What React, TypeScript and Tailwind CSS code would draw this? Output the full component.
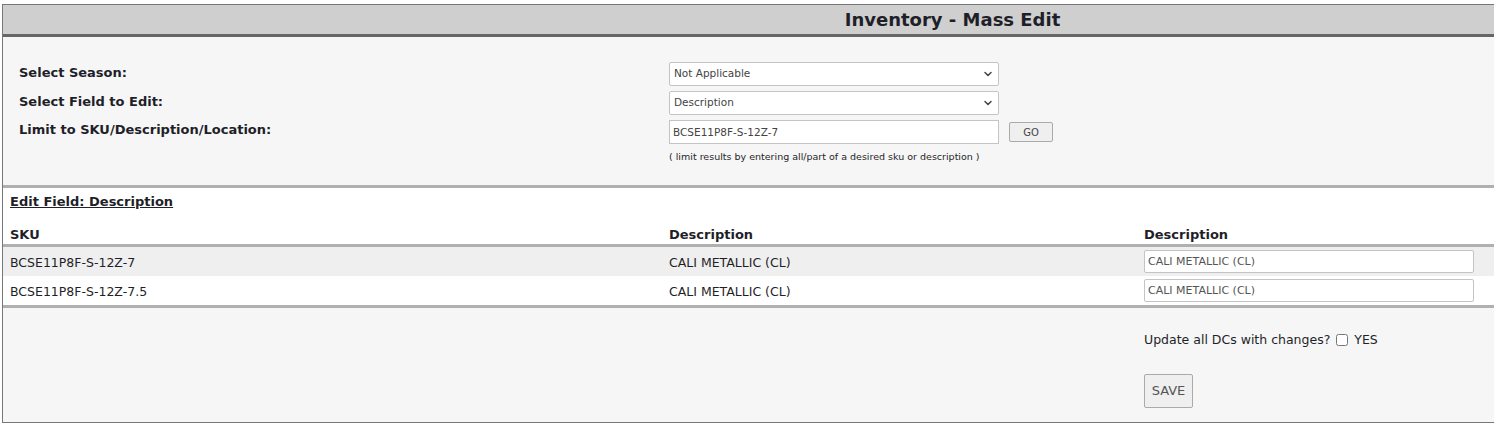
import { ChevronDown } from "lucide-react";

const rows = [
  { sku: "BCSE11P8F-S-12Z-7", desc: "CALI METALLIC (CL)" },
  { sku: "BCSE11P8F-S-12Z-7.5", desc: "CALI METALLIC (CL)" },
];

function Select({ value }: { value: string }) {
  return (
    <div className="relative w-[330px] h-[24px] bg-white border border-[#c4c4c4] rounded-[2px] flex items-center px-[4px] text-[10.5px] text-[#444]">
      <span>{value}</span>
      <ChevronDown className="absolute right-[4px] top-[5px] w-[12px] h-[12px] text-[#444]" strokeWidth={3} />
    </div>
  );
}

export default function App() {
  return (
    <div className="w-full pt-[4px] pl-[2px] pr-[1px] text-[#1f1f29] text-[12.5px]" style={{ fontFamily: '"DejaVu Sans", sans-serif' }}>
      <div className="border border-[#777] border-r-0 flex flex-col h-[419px]">
        {/* Header */}
        <div className="h-[32px] bg-[#cfcfcf] border-b-[3px] border-[#666] flex items-center justify-center pl-[408px]">
          <h1 className="text-[18px] font-bold">Inventory - Mass Edit</h1>
        </div>

        {/* Filters */}
        <div className="bg-[#f6f6f6] h-[151px] border-b-[3px] border-[#b0b0b0] flex pt-[25px]">
          <div className="w-[666px] pl-[16px] flex flex-col gap-[9px] pt-[1px] font-bold text-[13px]">
            <div>Select Season:</div>
            <div>Select Field to Edit:</div>
            <div>Limit to SKU/Description/Location:</div>
          </div>
          <div className="flex flex-col gap-[5px]">
            <Select value="Not Applicable" />
            <Select value="Description" />
            <div className="flex items-center gap-[10px]">
              <input
                defaultValue="BCSE11P8F-S-12Z-7"
                className="w-[330px] h-[24px] bg-white border border-[#c4c4c4] px-[3px] text-[10.5px] text-[#444] outline-none"
              />
              <button className="w-[44px] h-[20px] bg-[#efefef] border border-[#aaa] rounded-[2px] text-[10px] text-[#444]">GO</button>
            </div>
            <div className="text-[9.5px] mt-[1px]">( limit results by entering all/part of a desired sku or description )</div>
          </div>
        </div>

        {/* Edit table */}
        <div className="bg-white">
          <div className="px-[7px] pt-[4px] font-bold text-[13px] underline">Edit Field: Description</div>
          <div className="flex font-bold text-[13px] pt-[13px] pb-0 border-b-[3px] border-[#b0b0b0]">
            <div className="w-[666px] pl-[7px]">SKU</div>
            <div className="w-[475px]">Description</div>
            <div>Description</div>
          </div>
          {rows.map((r, i) => (
            <div key={r.sku} className={`flex items-center h-[29px] ${i === 0 ? "bg-[#efefef]" : "bg-white"}`}>
              <div className="w-[666px] pl-[7px] pt-[3px]">{r.sku}</div>
              <div className="w-[475px] pt-[3px]">{r.desc}</div>
              <input
                defaultValue={r.desc}
                className="w-[330px] h-[23px] bg-white border border-[#c4c4c4] rounded-[2px] px-[3px] text-[11px] text-[#555] outline-none"
              />
            </div>
          ))}
        </div>

        {/* Footer */}
        <div className="flex-1 bg-[#f6f6f6] border-t-[3px] border-[#b0b0b0] pl-[1141px] pt-[23px]">
          <div className="flex items-center gap-[6px]">
            <span>Update all DCs with changes?</span>
            <input type="checkbox" className="w-[12px] h-[12px] m-0" />
            <span>YES</span>
          </div>
          <button className="mt-[24px] w-[49px] h-[34px] bg-[#efefef] border border-[#aaa] rounded-[2px] text-[13px] text-[#555]">SAVE</button>
        </div>
      </div>
    </div>
  );
}
